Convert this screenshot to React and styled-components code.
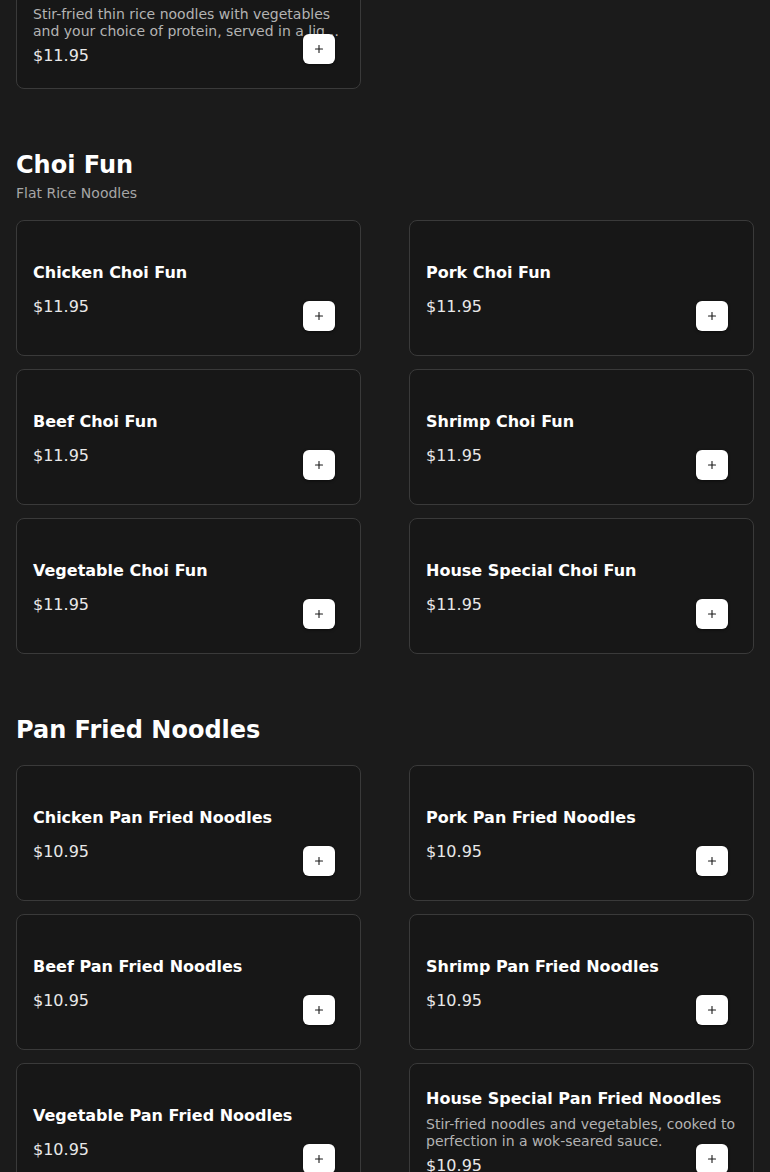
import React, { useLayoutEffect, useRef } from 'react'
import styled, { createGlobalStyle } from 'styled-components'
import { Plus } from 'lucide-react'

const GlobalStyle = createGlobalStyle`
  html, body {
    margin: 0;
    padding: 0;
    background: #1b1b1b;
    color: #fff;
    font-family: 'DejaVu Sans', 'Liberation Sans', sans-serif;
  }
`

const Page = styled.main`
  padding: 0 16px 200px;
`

const Section = styled.section`
  & + & {
    margin-top: 58px;
  }
`

const Header = styled.header`
  margin-bottom: 17px;
`

const Heading = styled.h2`
  margin: 0;
  font-size: 24px;
  line-height: 36px;
  font-weight: 700;
  color: #fff;
`

const Subheading = styled.p`
  margin: 0;
  font-size: 14px;
  line-height: 20px;
  color: #a6a6a6;
`

const Grid = styled.div`
  display: grid;
  grid-template-columns: repeat(2, 1fr);
  column-gap: 48px;
  row-gap: 13px;
`

const Card = styled.article`
  position: relative;
  box-sizing: border-box;
  height: 136px;
  padding: 3px 16px 0;
  display: flex;
  flex-direction: column;
  justify-content: center;
  background: #171717;
  border: 1px solid #3a3a3a;
  border-radius: 8px;
`

const Title = styled.h3`
  margin: 0 0 ${(p) => (p.$hasDesc ? '5px' : '10px')};
  font-size: 16px;
  line-height: 24px;
  font-weight: 700;
  color: #fff;
`

const Desc = styled.p`
  margin: 0 0 4px;
  font-size: 14px;
  line-height: 17px;
  color: #b3b3b3;
  display: -webkit-box;
  -webkit-line-clamp: 2;
  -webkit-box-orient: vertical;
  overflow: hidden;
`

const Price = styled.span`
  font-size: 16px;
  line-height: 24px;
  color: #e8e8e8;
`

const AddButton = styled.button`
  position: absolute;
  right: 25px;
  bottom: 24px;
  width: 32px;
  height: 30px;
  padding: 0;
  display: flex;
  align-items: center;
  justify-content: center;
  background: #fff;
  color: #1a1a1a;
  border: none;
  border-radius: 6px;
  box-shadow: 0 1px 3px rgba(0, 0, 0, 0.5);
  cursor: pointer;
`

const meiFun = [
  { name: 'Chicken Mei Fun', price: '11.95' },
  { name: 'Pork Mei Fun', price: '11.95' },
  { name: 'Beef Mei Fun', price: '11.95' },
  { name: 'Shrimp Mei Fun', price: '11.95' },
  { name: 'Vegetable Mei Fun', price: '11.95' },
  { name: 'House Special Mei Fun', price: '11.95' },
  {
    name: 'Singapore Mei Fun',
    price: '11.95',
    desc: 'Stir-fried thin rice noodles with vegetables and your choice of protein, served in a light curry sauce.',
  },
]

const choiFun = [
  'Chicken Choi Fun',
  'Pork Choi Fun',
  'Beef Choi Fun',
  'Shrimp Choi Fun',
  'Vegetable Choi Fun',
  'House Special Choi Fun',
].map((name) => ({ name, price: '11.95' }))

const panFried = [
  { name: 'Chicken Pan Fried Noodles', price: '10.95' },
  { name: 'Pork Pan Fried Noodles', price: '10.95' },
  { name: 'Beef Pan Fried Noodles', price: '10.95' },
  { name: 'Shrimp Pan Fried Noodles', price: '10.95' },
  { name: 'Vegetable Pan Fried Noodles', price: '10.95' },
  {
    name: 'House Special Pan Fried Noodles',
    price: '10.95',
    desc: 'Stir-fried noodles and vegetables, cooked to perfection in a wok-seared sauce.',
  },
]

const MenuCard = ({ item }) => (
  <Card>
    <Title $hasDesc={!!item.desc}>{item.name}</Title>
    {item.desc && <Desc>{item.desc}</Desc>}
    <Price>${item.price}</Price>
    <AddButton aria-label={`Add ${item.name}`}>
      <Plus size={12} strokeWidth={2.2} />
    </AddButton>
  </Card>
)

const MenuSection = React.forwardRef(({ title, subtitle, items }, ref) => (
  <Section ref={ref}>
    <Header>
      <Heading>{title}</Heading>
      {subtitle && <Subheading>{subtitle}</Subheading>}
    </Header>
    <Grid>
      {items.map((item) => (
        <MenuCard key={item.name} item={item} />
      ))}
    </Grid>
  </Section>
))

export default function App() {
  const choiRef = useRef(null)

  // the reference is scrolled to just above the Choi Fun section
  useLayoutEffect(() => {
    const el = choiRef.current
    if (!el) return
    const top = el.getBoundingClientRect().top + window.scrollY
    window.scrollTo(0, top - 147)
  }, [])

  return (
    <>
      <GlobalStyle />
      <Page>
        <MenuSection title="Mei Fun" subtitle="Thin Rice Noodles" items={meiFun} />
        <MenuSection ref={choiRef} title="Choi Fun" subtitle="Flat Rice Noodles" items={choiFun} />
        <MenuSection title="Pan Fried Noodles" items={panFried} />
      </Page>
    </>
  )
}
